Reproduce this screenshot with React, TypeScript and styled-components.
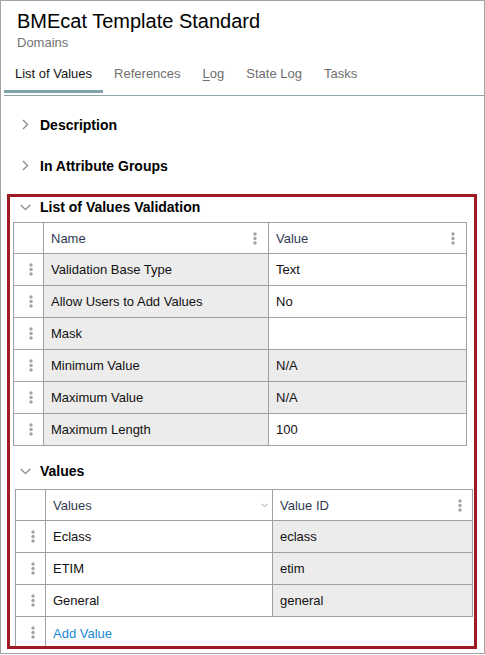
import { FC, Fragment } from 'react';
import styled, { createGlobalStyle } from 'styled-components';

const GlobalStyle = createGlobalStyle`
  * { box-sizing: border-box; }
  body {
    margin: 0;
    background: #fff;
    font-family: 'Liberation Sans', Arial, sans-serif;
    color: #111;
  }
`;

const Frame = styled.div`
  width: 485px;
  height: 654px;
  border: 1px solid #a4a4a4;
  background: #fff;
  overflow: hidden;
`;

const Header = styled.header`
  padding: 8px 0 0 16px;
`;

const Title = styled.h1`
  margin: 0;
  font-size: 20px;
  line-height: 24px;
  font-weight: normal;
  color: #000;
`;

const Subtitle = styled.div`
  margin-top: 2px;
  font-size: 13px;
  line-height: 16px;
  color: #737373;
`;

const TabBar = styled.nav`
  display: flex;
  margin-left: 3px;
  padding-bottom: 2px;
  border-bottom: 1px solid #8fa5ab;
`;

const Tab = styled.div<{ $active?: boolean }>`
  padding: 15px 11px 8px;
  font-size: 13px;
  line-height: 16px;
  color: ${(p) => (p.$active ? '#151515' : '#6e6e6e')};
  border-bottom: 3px solid ${(p) => (p.$active ? '#7fa2aa' : 'transparent')};

  u {
    text-decoration: underline;
    text-underline-offset: 2px;
  }
`;

const Content = styled.main`
  padding: 8px 7px 0 6px;
`;

const SectionHeader = styled.div<{ $height: number; $indent: number; $top?: number }>`
  display: flex;
  align-items: center;
  gap: 8px;
  height: ${(p) => p.$height}px;
  margin-top: ${(p) => p.$top ?? 0}px;
  padding-left: ${(p) => p.$indent}px;
  font-size: 14px;
  font-weight: bold;
  color: #000;
`;

const ChevronBox = styled.span`
  display: flex;
  justify-content: center;
  align-items: center;
  width: 14px;
`;

const Highlight = styled.section`
  margin-top: 8px;
  height: 455px;
  border: 3px solid #9e1b24;
  overflow: hidden;
`;

const Grid = styled.div<{ $cols: string; $offset: string }>`
  display: grid;
  grid-template-columns: ${(p) => p.$cols};
  margin: ${(p) => p.$offset};
  border-top: 1px solid #a0a0a0;
  border-left: 1px solid #a0a0a0;
  width: max-content;
`;

const Cell = styled.div<{
  $gray?: boolean;
  $head?: boolean;
  $plain?: boolean;
  $span?: boolean;
  $right?: number;
}>`
  display: flex;
  align-items: center;
  justify-content: space-between;
  height: ${(p) => (p.$head ? 31 : 32)}px;
  padding: 0 ${(p) => p.$right ?? 11}px 0 7px;
  border-right: ${(p) => (p.$plain ? 'none' : '1px solid #a0a0a0')};
  border-bottom: ${(p) => (p.$plain ? 'none' : '1px solid #a0a0a0')};
  background: ${(p) => (p.$gray ? '#ececec' : '#fff')};
  font-size: 13px;
  color: ${(p) => (p.$head ? '#2f3a52' : '#111')};
  grid-column: ${(p) => (p.$span ? '2 / -1' : 'auto')};
  white-space: nowrap;
`;

const HandleCell = styled.div<{ $head?: boolean }>`
  display: flex;
  align-items: center;
  justify-content: center;
  height: ${(p) => (p.$head ? 31 : 32)}px;
  padding-left: 5px;
  border-right: 1px solid #a0a0a0;
  border-bottom: 1px solid #a0a0a0;
  background: #fff;
`;

const Link = styled.span`
  color: #1b8ad3;
  cursor: pointer;
`;

const Dots: FC = () => (
  <svg width="4" height="13" viewBox="0 0 4 13">
    <circle cx="2" cy="2" r="1.7" fill="#a3a3a3" />
    <circle cx="2" cy="6.5" r="1.7" fill="#a3a3a3" />
    <circle cx="2" cy="11" r="1.7" fill="#a3a3a3" />
  </svg>
);

const ChevronRight: FC = () => (
  <svg width="7" height="11" viewBox="0 0 7 11">
    <polyline points="1,1 5.5,5.5 1,10" fill="none" stroke="#8a8a8a" strokeWidth="1.3" />
  </svg>
);

const ChevronDown: FC<{ small?: boolean }> = ({ small }) =>
  small ? (
    <svg width="7" height="5" viewBox="0 0 7 5">
      <polyline points="0.5,0.8 3.5,3.8 6.5,0.8" fill="none" stroke="#9a9a9a" strokeWidth="1" />
    </svg>
  ) : (
    <svg width="11" height="7" viewBox="0 0 11 7">
      <polyline points="0.8,1 5.5,5.6 10.2,1" fill="none" stroke="#8a8a8a" strokeWidth="1.3" />
    </svg>
  );

const validation = [
  { name: 'Validation Base Type', value: 'Text', locked: false },
  { name: 'Allow Users to Add Values', value: 'No', locked: false },
  { name: 'Mask', value: '', locked: false },
  { name: 'Minimum Value', value: 'N/A', locked: true },
  { name: 'Maximum Value', value: 'N/A', locked: true },
  { name: 'Maximum Length', value: '100', locked: false },
];

const values = [
  { label: 'Eclass', id: 'eclass' },
  { label: 'ETIM', id: 'etim' },
  { label: 'General', id: 'general' },
];

const tabs = ['List of Values', 'References', 'Log', 'State Log', 'Tasks'];

const App: FC = () => (
  <>
    <GlobalStyle />
    <Frame>
      <Header>
        <Title>BMEcat Template Standard</Title>
        <Subtitle>Domains</Subtitle>
      </Header>
      <TabBar>
        {tabs.map((t, i) => (
          <Tab key={t} $active={i === 0}>
            {t === 'Log' ? (
              <>
                <u>L</u>og
              </>
            ) : (
              t
            )}
          </Tab>
        ))}
      </TabBar>
      <Content>
        <SectionHeader $height={41} $indent={11}>
          <ChevronBox>
            <ChevronRight />
          </ChevronBox>
          Description
        </SectionHeader>
        <SectionHeader $height={41} $indent={11}>
          <ChevronBox>
            <ChevronRight />
          </ChevronBox>
          In Attribute Groups
        </SectionHeader>

        <Highlight>
          <SectionHeader $height={20} $indent={8}>
            <ChevronBox>
              <ChevronDown />
            </ChevronBox>
            List of Values Validation
          </SectionHeader>
          <Grid $cols="30px 225px 198px" $offset="5px 0 0 3px">
            <HandleCell $head />
            <Cell $head>
              Name
              <Dots />
            </Cell>
            <Cell $head>
              Value
              <Dots />
            </Cell>
            {validation.map((row) => (
              <Fragment key={row.name}>
                <HandleCell>
                  <Dots />
                </HandleCell>
                <Cell $gray>{row.name}</Cell>
                <Cell $gray={row.locked}>{row.value}</Cell>
              </Fragment>
            ))}
          </Grid>

          <SectionHeader $height={20} $indent={8} $top={15}>
            <ChevronBox>
              <ChevronDown />
            </ChevronBox>
            Values
          </SectionHeader>
          <Grid $cols="30px 227px 200px" $offset="8px 0 0 5px">
            <HandleCell $head />
            <Cell $head $right={4}>
              Values
              <ChevronDown small />
            </Cell>
            <Cell $head $right={10}>
              Value ID
              <Dots />
            </Cell>
            {values.map((row) => (
              <Fragment key={row.id}>
                <HandleCell>
                  <Dots />
                </HandleCell>
                <Cell>{row.label}</Cell>
                <Cell $gray>{row.id}</Cell>
              </Fragment>
            ))}
            <HandleCell>
              <Dots />
            </HandleCell>
            <Cell $plain $span>
              <Link>Add Value</Link>
            </Cell>
          </Grid>
        </Highlight>
      </Content>
    </Frame>
  </>
);

export default App;
